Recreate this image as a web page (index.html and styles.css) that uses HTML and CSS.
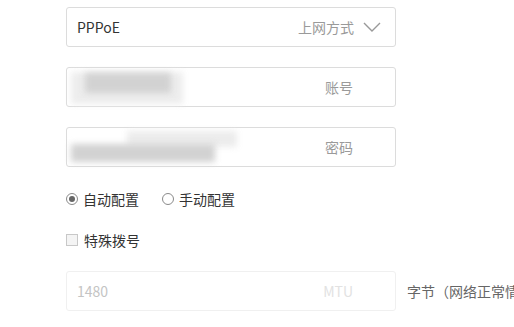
FILE: index.html
```html
<!DOCTYPE html>
<html lang="zh-CN">
<head>
  <meta charset="UTF-8">
  <title>上网设置</title>
  <link rel="stylesheet" href="styles.css">
</head>
<body>

<div class="form">
  <div class="field">
    <span class="value">PPPoE</span>
    <span class="label">上网方式</span>
    <svg class="chevron" width="18" height="10" viewBox="0 0 18 10">
      <polyline points="1,1 9,9 17,1" fill="none" stroke="#999" stroke-width="1.4"/>
    </svg>
  </div>

  <div class="field">
    <div class="mask mask-user2"></div>
    <div class="mask mask-user"></div>
    <span class="label label-r">账号</span>
  </div>

  <div class="field">
    <div class="mask mask-pass2"></div>
    <div class="mask mask-pass"></div>
    <span class="label label-r">密码</span>
  </div>

  <div class="radios">
    <label class="opt"><span class="radio checked"></span>自动配置</label>
    <label class="opt"><span class="radio"></span>手动配置</label>
  </div>

  <div class="check-row">
    <label class="opt"><span class="check"></span>特殊拨号</label>
  </div>

  <div class="mtu-row">
    <div class="field field-dim">
      <span class="value dim">1480</span>
      <span class="label label-r faint">MTU</span>
    </div>
    <span class="unit">字节（网络正常情况下不建议修改）</span>
  </div>
</div>

</body>
</html>
```

FILE: styles.css
```css
body {
  font-family: "Noto Sans CJK SC", "Noto Sans", sans-serif;
  background-color: #fff;
  margin: 0;
  padding: 0;
  overflow: hidden;
}
.form {
  padding: 7px 0 0 66px;
  width: 600px;
}
.field {
  width: 306px;
  height: 38px;
  border: 1px solid #dcdcdc;
  border-radius: 3px;
  display: flex;
  align-items: center;
  padding: 0 12px 0 10px;
  margin-bottom: 20px;
  position: relative;
}
.value {
  font-size: 14px;
  color: #333;
  flex: 1;
}
.value.dim {
  color: #c4c4c4;
}
.label {
  font-size: 14px;
  color: #9a9a9a;
  line-height: 18px;
  margin-top: -1px;
}
.label-r {
  margin-left: auto;
  margin-right: 30px;
}
.faint {
  color: #e2e2e2;
}
.chevron {
  margin-left: 9px;
  margin-right: 2px;
}
/* 打码区域 */
.mask {
  position: absolute;
  background: #d8d8d8;
  filter: blur(3px);
}
.mask-user {
  left: 18px;
  top: 5px;
  width: 86px;
  height: 20px;
  background: #d2d2d2;
}
.mask-user2 {
  left: 4px;
  top: 4px;
  width: 112px;
  height: 32px;
  background: #ededed;
}
.mask-pass {
  left: 4px;
  top: 16px;
  width: 144px;
  height: 18px;
  background: #d2d2d2;
}
.mask-pass2 {
  left: 60px;
  top: 3px;
  width: 110px;
  height: 16px;
  background: #ececec;
}
.radios {
  display: flex;
  gap: 23px;
  margin-top: 2px;
  height: 24px;
  align-items: center;
}
.opt {
  display: flex;
  align-items: center;
  font-size: 14px;
  color: #333;
}
.radio {
  width: 10px;
  height: 10px;
  border: 1px solid #8a8a8a;
  border-radius: 50%;
  margin-right: 5px;
  position: relative;
}
.radio.checked::after {
  content: "";
  position: absolute;
  left: 2px;
  top: 2px;
  width: 6px;
  height: 6px;
  border-radius: 50%;
  background: #666;
}
.check-row {
  margin-top: 17px;
  height: 24px;
  display: flex;
  align-items: center;
}
.check {
  width: 10px;
  height: 10px;
  border: 1px solid #c8c8c8;
  background: #f4f4f4;
  margin-right: 6px;
}
.mtu-row {
  margin-top: 19px;
  display: flex;
  align-items: center;
}
.field-dim {
  border-color: #f0f0f0;
  margin-bottom: 0;
}
.unit {
  margin-left: 11px;
  font-size: 14px;
  color: #666;
  white-space: nowrap;
}
```
